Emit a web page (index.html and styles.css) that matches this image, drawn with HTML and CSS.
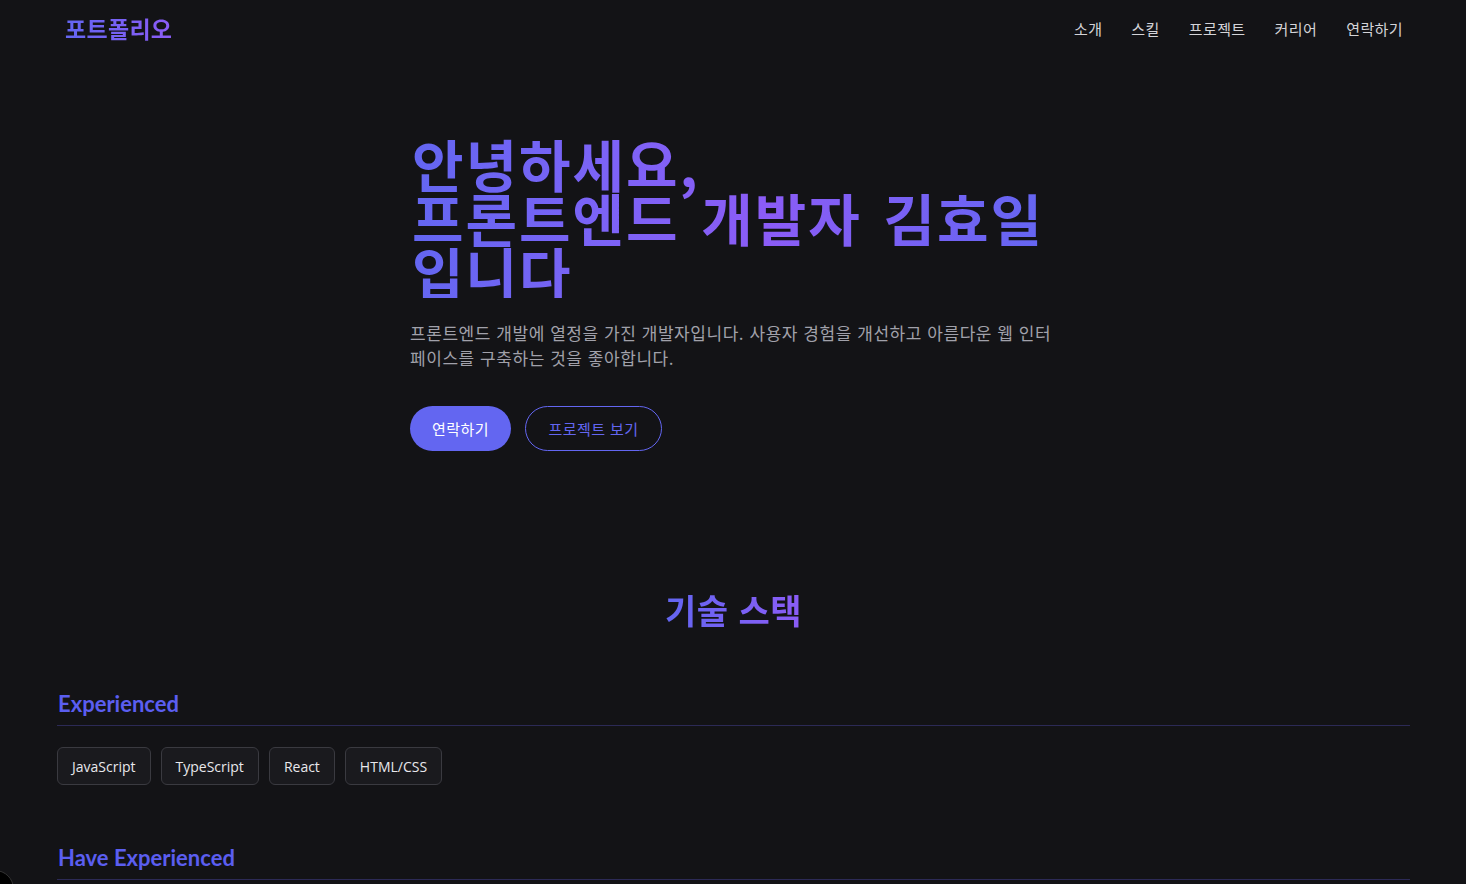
FILE: index.html
```html
<!DOCTYPE html>
<html lang="ko">
<head>
<meta charset="utf-8">
<title>포트폴리오</title>
<link rel="stylesheet" href="styles.css">
</head>
<body>
<header class="nav">
  <a class="logo" href="#">포트폴리오</a>
  <nav class="links">
    <a href="#about">소개</a>
    <a href="#skills">스킬</a>
    <a href="#projects">프로젝트</a>
    <a href="#career">커리어</a>
    <a href="#contact">연락하기</a>
  </nav>
</header>

<main>
  <section class="hero">
    <div class="hero-inner">
      <h1 class="hero-title">안녕하세요,<br>프론트엔드 개발자 김효일 입니다</h1>
      <p class="hero-text">프론트엔드 개발에 열정을 가진 개발자입니다. 사용자 경험을 개선하고 아름다운 웹 인터페이스를 구축하는 것을 좋아합니다.</p>
      <div class="hero-actions">
        <a class="btn btn-primary" href="#contact">연락하기</a>
        <a class="btn btn-outline" href="#projects">프로젝트 보기</a>
      </div>
    </div>
  </section>

  <section class="skills" id="skills">
    <h2 class="section-title">기술 스택</h2>
    <div class="group">
      <h3 class="group-title">Experienced</h3>
      <div class="tags">
        <span class="tag">JavaScript</span>
        <span class="tag">TypeScript</span>
        <span class="tag">React</span>
        <span class="tag">HTML/CSS</span>
      </div>
    </div>
    <div class="group">
      <h3 class="group-title">Have Experienced</h3>
    </div>
  </section>
</main>

<div class="dev-badge"></div>
</body>
</html>
```

FILE: styles.css
```css
* { box-sizing: border-box; }

html, body {
  margin: 0;
  padding: 0;
  background: #131316;
  color: #e4e4e7;
  font-family: "Noto Sans CJK KR", "Noto Sans", sans-serif;
  overflow: hidden;
}

a { text-decoration: none; color: inherit; }

.nav {
  height: 56px;
  padding: 0 63px 0 65px;
  display: flex;
  align-items: center;
  justify-content: space-between;
}

.logo {
  font-size: 23px;
  font-weight: 700;
  letter-spacing: 0.3px;
  background: linear-gradient(90deg, #6366f1, #8b5cf6);
  -webkit-background-clip: text;
  background-clip: text;
  color: transparent;
}

.links {
  display: flex;
  gap: 29px;
  font-size: 15px;
  letter-spacing: 0.4px;
  color: #d4d4d8;
}

.hero {
  padding-top: 80px;
  min-height: 534px;
}

.hero-inner {
  width: 646px;
  margin: 0 auto;
}

.hero-title {
  margin: 0;
  font-size: 56px;
  line-height: 54px;
  font-weight: 700;
  letter-spacing: 2px;
  word-spacing: 4px;
  background: linear-gradient(90deg, #6366f1 0%, #7c63f6 30%, #8b5cf6 55%, #6366f1 100%);
  -webkit-background-clip: text;
  background-clip: text;
  color: transparent;
  padding-left: 2px;
}

.hero-text {
  margin: 22px 0 0;
  font-size: 17px;
  line-height: 25px;
  letter-spacing: 0.55px;
  color: #a1a1aa;
}

.hero-actions {
  margin-top: 36px;
  display: flex;
  gap: 14px;
}

.btn {
  height: 45px;
  border-radius: 999px;
  display: inline-flex;
  align-items: center;
  justify-content: center;
  font-size: 15px;
  letter-spacing: 0.4px;
}

.btn-primary {
  width: 101px;
  background: #6366f1;
  color: #ffffff;
}

.btn-outline {
  width: 137px;
  border: 1px solid #6366f1;
  color: #6366f1;
}

.skills {
  padding: 0 56px 0 57px;
}

.section-title {
  text-align: center;
  font-size: 34px;
  line-height: 40px;
  font-weight: 700;
  letter-spacing: 0.5px;
  width: max-content;
  margin: 0 auto;
  background: linear-gradient(90deg, #6366f1, #8b5cf6);
  -webkit-background-clip: text;
  background-clip: text;
  color: transparent;
}

.group {
  margin-top: 59px;
}

.group + .group {
  margin-top: 58px;
}

.group-title {
  margin: 0;
  padding: 0 0 6px 1px;
  font-family: "Lato", "Noto Sans", sans-serif;
  font-size: 22px;
  line-height: 30px;
  font-weight: 700;
  color: #5b5ef0;
  border-bottom: 1px solid #2c2a56;
}

.tags {
  margin-top: 21px;
  display: flex;
  gap: 10px;
}

.tag {
  height: 38px;
  padding: 0 14px;
  display: inline-flex;
  align-items: center;
  border: 1px solid #3a3a40;
  border-radius: 6px;
  background: #1a1a1e;
  color: #e8e8ec;
  font-family: "Open Sans", "Noto Sans", sans-serif;
  font-size: 14px;
}

.dev-badge {
  position: fixed;
  left: -24px;
  bottom: -24px;
  width: 38px;
  height: 38px;
  border-radius: 50%;
  background: #000;
  border: 1px solid #333;
}
```
